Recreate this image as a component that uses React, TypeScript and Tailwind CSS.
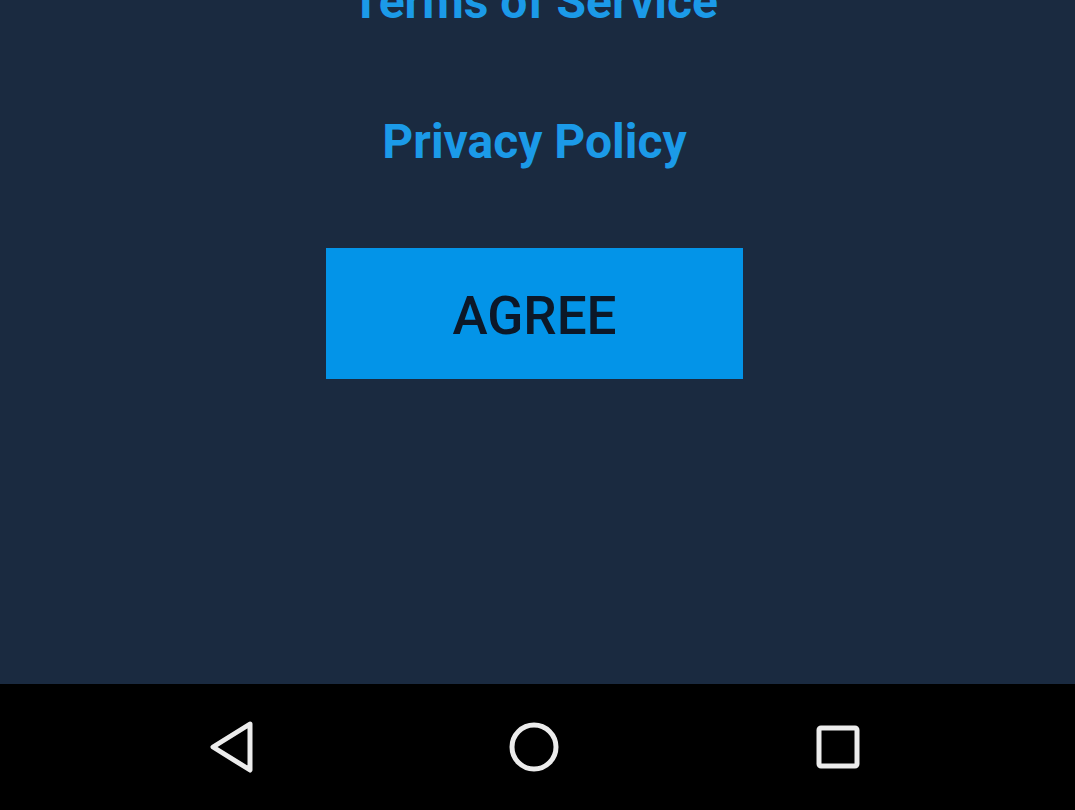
export default function App() {
  return (
    <div className="flex h-[810px] w-[1075px] flex-col overflow-hidden font-['Roboto','Liberation_Sans',sans-serif]">
      <main className="flex h-[684px] flex-col items-center bg-[#1a2a40] pr-[6px]">
        <a className="-mt-[26px] text-[48px] font-bold leading-[56px] text-[#1b9ae8]">
          Terms of Service
        </a>
        <a className="mt-[84px] text-[48px] font-bold leading-[56px] text-[#1b9ae8]">
          Privacy Policy
        </a>
        <button className="mt-[78px] flex h-[131px] w-[417px] items-center justify-center bg-[#0394e8] pt-[7px] text-[53px] font-medium text-[#0c1828]">
          AGREE
        </button>
      </main>
      <nav className="flex h-[126px] items-center justify-between bg-black pl-[198px] pr-[205px]">
        <svg width="64" height="64" viewBox="0 0 64 64">
          <path
            d="M52 9 L15 32 L52 55 Z"
            fill="none"
            stroke="#ececec"
            strokeWidth="5"
            strokeLinejoin="round"
          />
        </svg>
        <svg width="64" height="64" viewBox="0 0 64 64">
          <circle cx="32" cy="32" r="22" fill="none" stroke="#ececec" strokeWidth="5" />
        </svg>
        <svg width="64" height="64" viewBox="0 0 64 64">
          <rect x="13" y="13" width="38" height="38" rx="2" fill="none" stroke="#ececec" strokeWidth="5" />
        </svg>
      </nav>
    </div>
  );
}
